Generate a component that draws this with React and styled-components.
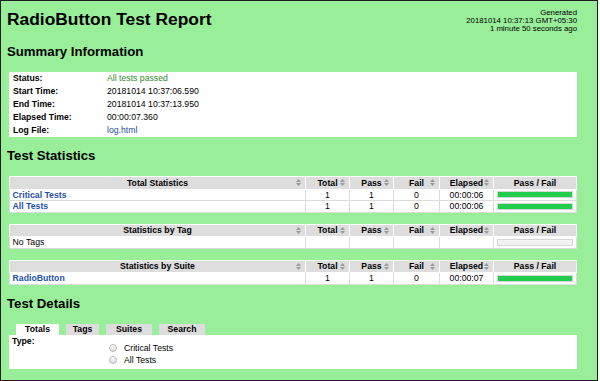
import React from "react";
import styled, { createGlobalStyle } from "styled-components";

const GlobalStyle = createGlobalStyle`
  html, body {
    margin: 0;
    padding: 0;
    background: #fff;
  }
  body {
    font-family: "Liberation Sans", Arial, sans-serif;
    font-size: 8.7px;
    color: #000;
  }
`;

const Frame = styled.div`
  box-sizing: border-box;
  width: 598px;
  height: 381px;
  border: 1px solid #1c1c1c;
  background: #99ee99;
  padding: 8px 20px 0 6px;
  overflow: hidden;
`;

const Header = styled.header`
  display: flex;
  justify-content: space-between;
  align-items: flex-start;
  height: 24px;
`;

const Title = styled.h1`
  margin: 0;
  font-size: 17.4px;
  line-height: 20px;
  font-weight: bold;
`;

const Generated = styled.div`
  text-align: right;
  font-size: 7.8px;
  line-height: 8px;
  white-space: nowrap;
`;

const Heading = styled.h2`
  margin: 11px 0 12px;
  font-size: 13.2px;
  line-height: 16px;
  font-weight: bold;
`;

const Summary = styled.div`
  margin-left: 2px;
  padding: 0 4px;
  background: #fff;
  display: grid;
  grid-template-columns: 94px 1fr;
  line-height: 13px;
`;

const SummaryLabel = styled.div`
  font-weight: bold;
`;

const SummaryValue = styled.div`
  color: ${p => (p.$pass ? "#2e8b2e" : "#000")};
`;

const Link = styled.a`
  color: #2450a8;
  text-decoration: none;
  font-weight: ${p => (p.$bold ? "bold" : "normal")};
`;

const StatTable = styled.table`
  width: 568px;
  margin: 0 0 11px 2px;
  border-collapse: collapse;
  table-layout: fixed;
  background: #fff;
`;

const Col = styled.col`
  width: ${p => (p.$w ? `${p.$w}px` : "auto")};
`;

const Th = styled.th`
  height: 11.5px;
  padding: 0 2.6px;
  background: #ddd;
  border: 1px solid #fff;
  font-weight: bold;
  text-align: center;
`;

const ThInner = styled.div`
  display: grid;
  grid-template-columns: 1fr auto 1fr;
  align-items: center;
`;

const SortIcon = styled.svg`
  justify-self: end;
  width: 5px;
  height: 7px;
  margin-right: 1px;
`;

const Td = styled.td`
  height: 10.5px;
  padding: 0 2.6px;
  border: 1px solid #dcdcdc;
  text-align: ${p => (p.$left ? "left" : "center")};
  vertical-align: middle;
`;

const Graph = styled.div`
  height: 5px;
  border: 1px solid #d6d6d6;
  background: #f2f2f2;
`;

const PassBar = styled.div`
  height: 100%;
  width: ${p => p.$pct}%;
  background: #22cc4c;
`;

const Tabs = styled.div`
  display: flex;
  gap: 7px;
  margin-left: 9px;
`;

const Tab = styled.div`
  width: ${p => p.$w}px;
  height: 11px;
  line-height: 11px;
  text-align: center;
  font-weight: bold;
  background: ${p => (p.$active ? "#fff" : "#ddd")};
`;

const Details = styled.div`
  margin-left: 2px;
  height: 34px;
  padding: 0 3px;
  background: #fff;
  display: grid;
  grid-template-columns: 97px 1fr;
  align-items: start;
`;

const TypeLabel = styled.div`
  margin-top: 1px;
  line-height: 11px;
  font-weight: bold;
`;

const Options = styled.div`
  padding-top: 7px;
`;

const Option = styled.label`
  display: flex;
  align-items: center;
  gap: 7px;
  height: 12px;
`;

const Radio = styled.input`
  appearance: none;
  margin: 0;
  width: 8px;
  height: 8px;
  border: 1px solid #b8b8b8;
  border-radius: 50%;
  background: linear-gradient(#fdfdfd, #dedede);
`;

const Sort = () => (
  <SortIcon viewBox="0 0 5 7">
    <path d="M0 3 L2.5 0 L5 3 Z M0 4 L2.5 7 L5 4 Z" fill="#9a9a9a" />
  </SortIcon>
);

const HeadCell = ({ children, sortable = true }) => (
  <Th>
    <ThInner>
      <span />
      <span>{children}</span>
      {sortable ? <Sort /> : <span />}
    </ThInner>
  </Th>
);

const StatsBlock = ({ title, rows }) => (
  <StatTable>
    <colgroup>
      <Col />
      <Col $w={44} />
      <Col $w={44} />
      <Col $w={46} />
      <Col $w={54} />
      <Col $w={83} />
    </colgroup>
    <thead>
      <tr>
        <HeadCell>{title}</HeadCell>
        <HeadCell>Total</HeadCell>
        <HeadCell>Pass</HeadCell>
        <HeadCell>Fail</HeadCell>
        <HeadCell>Elapsed</HeadCell>
        <HeadCell sortable={false}>Pass / Fail</HeadCell>
      </tr>
    </thead>
    <tbody>
      {rows.map(r => (
        <tr key={r.name}>
          <Td $left>
            {r.link ? <Link $bold>{r.name}</Link> : r.name}
          </Td>
          <Td>{r.total}</Td>
          <Td>{r.pass}</Td>
          <Td>{r.fail}</Td>
          <Td>{r.elapsed}</Td>
          <Td>
            <Graph>
              <PassBar $pct={r.total ? (r.pass / r.total) * 100 : 0} />
            </Graph>
          </Td>
        </tr>
      ))}
    </tbody>
  </StatTable>
);

const summary = [
  ["Status:", "All tests passed", "pass"],
  ["Start Time:", "20181014 10:37:06.590"],
  ["End Time:", "20181014 10:37:13.950"],
  ["Elapsed Time:", "00:00:07.360"],
  ["Log File:", "log.html", "link"],
];

const tabs = [
  { name: "Totals", w: 43, active: true },
  { name: "Tags", w: 33 },
  { name: "Suites", w: 46 },
  { name: "Search", w: 46 },
];

export default function App() {
  return (
    <>
      <GlobalStyle />
      <Frame>
        <Header>
          <Title>RadioButton Test Report</Title>
          <Generated>
            Generated
            <br />
            20181014 10:37:13 GMT+05:30
            <br />1 minute 50 seconds ago
          </Generated>
        </Header>

        <Heading>Summary Information</Heading>
        <Summary>
          {summary.map(([label, value, kind]) => (
            <React.Fragment key={label}>
              <SummaryLabel>{label}</SummaryLabel>
              <SummaryValue $pass={kind === "pass"}>
                {kind === "link" ? <Link>{value}</Link> : value}
              </SummaryValue>
            </React.Fragment>
          ))}
        </Summary>

        <Heading>Test Statistics</Heading>
        <StatsBlock
          title="Total Statistics"
          rows={[
            { name: "Critical Tests", link: true, total: 1, pass: 1, fail: 0, elapsed: "00:00:06" },
            { name: "All Tests", link: true, total: 1, pass: 1, fail: 0, elapsed: "00:00:06" },
          ]}
        />
        <StatsBlock
          title="Statistics by Tag"
          rows={[{ name: "No Tags", total: "", pass: "", fail: "", elapsed: "" }]}
        />
        <StatsBlock
          title="Statistics by Suite"
          rows={[
            { name: "RadioButton", link: true, total: 1, pass: 1, fail: 0, elapsed: "00:00:07" },
          ]}
        />

        <Heading>Test Details</Heading>
        <Tabs>
          {tabs.map(t => (
            <Tab key={t.name} $w={t.w} $active={t.active}>
              {t.name}
            </Tab>
          ))}
        </Tabs>
        <Details>
          <TypeLabel>Type:</TypeLabel>
          <Options>
            <Option>
              <Radio type="radio" name="type" />
              Critical Tests
            </Option>
            <Option>
              <Radio type="radio" name="type" />
              All Tests
            </Option>
          </Options>
        </Details>
      </Frame>
    </>
  );
}
